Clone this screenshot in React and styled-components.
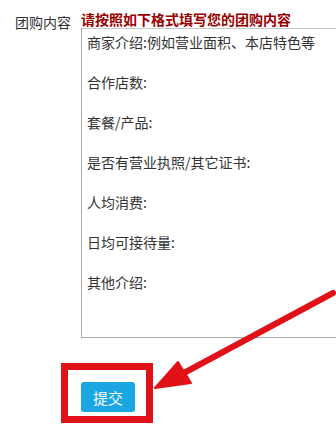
import React from 'react'
import styled, { createGlobalStyle } from 'styled-components'

const GlobalStyle = createGlobalStyle`
  html, body {
    margin: 0;
    padding: 0;
    background: #fff;
    overflow: hidden;
  }
  body {
    font-family: "Noto Sans CJK SC", "Noto Sans", sans-serif;
    color: #333;
  }
`

const Page = styled.div`
  position: relative;
  width: 336px;
  height: 430px;
  padding: 10px 0 0 15px;
  box-sizing: border-box;
  overflow: hidden;
`

const FieldRow = styled.div`
  display: flex;
  align-items: flex-start;
`

const Label = styled.div`
  width: 66px;
  flex-shrink: 0;
  padding-top: 3px;
  font-size: 14px;
  line-height: 18px;
  color: #333;
`

// the textarea runs on past the right edge of the shot, so clip it here
const Field = styled.div`
  display: flex;
  flex-direction: column;
  width: 255px;
  overflow: hidden;
`

const Hint = styled.div`
  font-size: 14px;
  line-height: 18px;
  font-weight: bold;
  color: #990000;
  white-space: nowrap;
`

const ContentBox = styled.textarea`
  width: 300px;
  height: 310px;
  flex-shrink: 0;
  box-sizing: border-box;
  margin: 0;
  padding: 3px 5px;
  border: 1px solid #ababab;
  border-top-color: #c8c8c8;
  border-radius: 0;
  resize: none;
  outline: none;
  font-family: "Noto Sans CJK SC", "Noto Sans", sans-serif;
  font-size: 14px;
  line-height: 20px;
  color: #333;
  background: #fff;
  overflow: hidden;
`

const ButtonRow = styled.div`
  margin: 25px 0 0 46px;
  display: flex;
`

const Highlight = styled.div`
  box-sizing: border-box;
  width: 92px;
  height: 60px;
  padding: 12px 0 0 13px;
  border: 7px solid #e01218;
`

const SubmitButton = styled.button`
  width: 54px;
  height: 30px;
  border: none;
  border-radius: 3px;
  background: #1aa6e3;
  color: #fff;
  font-family: "Noto Sans CJK SC", "Noto Sans", sans-serif;
  font-size: 15px;
  padding: 0;
  cursor: pointer;
`

const Overlay = styled.svg`
  position: absolute;
  left: 0;
  top: 0;
  width: 336px;
  height: 430px;
  pointer-events: none;
`

const content = [
  '商家介绍:例如营业面积、本店特色等',
  '',
  '合作店数:',
  '',
  '套餐/产品:',
  '',
  '是否有营业执照/其它证书:',
  '',
  '人均消费:',
  '',
  '日均可接待量:',
  '',
  '其他介绍:',
].join('\n')

export default function App() {
  return (
    <>
      <GlobalStyle />
      <Page>
        <FieldRow>
          <Label>团购内容</Label>
          <Field>
            <Hint>请按照如下格式填写您的团购内容</Hint>
            <ContentBox readOnly defaultValue={content} />
          </Field>
        </FieldRow>
        <ButtonRow>
          <Highlight>
            <SubmitButton>提交</SubmitButton>
          </Highlight>
        </ButtonRow>
        <Overlay viewBox="0 0 336 430">
          <line x1="333" y1="293" x2="182" y2="374" stroke="#e01218" strokeWidth="6" strokeLinecap="round" />
          <polygon points="155,388 178,362 191,383" fill="#e01218" stroke="#e01218" strokeWidth="2" strokeLinejoin="round" />
        </Overlay>
      </Page>
    </>
  )
}
